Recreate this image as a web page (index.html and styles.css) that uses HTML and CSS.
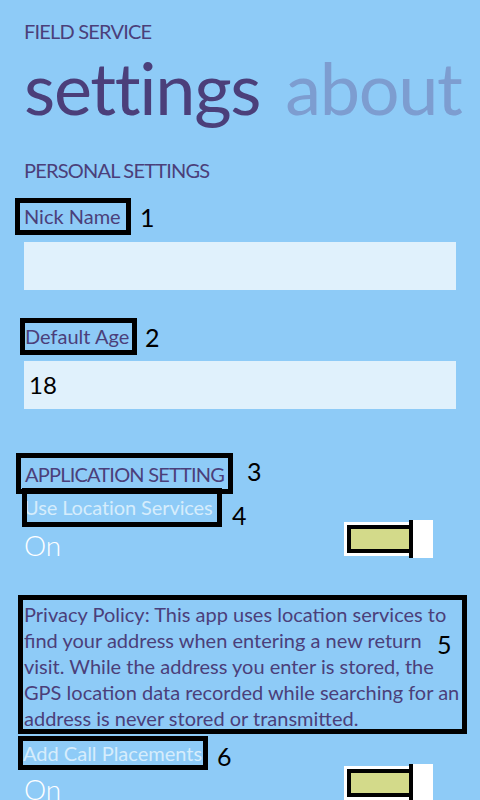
FILE: index.html
```html
<!DOCTYPE html>
<html lang="en">
<head>
<meta charset="utf-8">
<title>Field Service - settings</title>
<link rel="stylesheet" href="styles.css">
</head>
<body>
<div class="page">
  <div class="app-title caps">FIELD SERVICE</div>
  <div class="pivot"><span class="pivot-item active">settings</span><span class="pivot-item">about</span></div>

  <div class="section caps">PERSONAL SETTINGS</div>

  <div class="label-row row-1">
    <div class="tag tag-1">Nick Name</div>
    <span class="num num-1">1</span>
  </div>
  <div class="input"></div>

  <div class="label-row row-2">
    <div class="tag tag-2">Default Age</div>
    <span class="num num-2">2</span>
  </div>
  <div class="input input-2">18</div>

  <div class="label-row row-3">
    <div class="tag tag-3 caps">APPLICATION SETTING</div>
    <span class="num num-3">3</span>
  </div>
  <div class="label-row row-4">
    <div class="tag tag-4 light"><span class="clip-text">Use Location Services</span></div>
    <span class="num num-4">4</span>
  </div>
  <div class="switch-row row-on-1">
    <span class="on-text">On</span>
    <div class="toggle">
      <div class="track"><div class="fill"></div></div>
      <div class="thumb"></div>
    </div>
  </div>

  <div class="privacy">
    <div class="privacy-text">Privacy Policy: This app uses location services to<br>find your address when entering a new return<br>visit. While the address you enter is stored, the<br>GPS location data recorded while searching for an<br>address is never stored or transmitted.</div>
    <span class="num num-5">5</span>
  </div>

  <div class="label-row row-6">
    <div class="tag tag-6 light">Add Call Placements</div>
    <span class="num num-6">6</span>
  </div>
  <div class="switch-row row-on-2">
    <span class="on-text">On</span>
    <div class="toggle">
      <div class="track"><div class="fill"></div></div>
      <div class="thumb"></div>
    </div>
  </div>
</div>
</body>
</html>
```

FILE: styles.css
```css
html, body {
  margin: 0;
  padding: 0;
}
body {
  background: #8ecbf7;
  font-family: Lato, "Open Sans", "DejaVu Sans", sans-serif;
  color: #4b3f7a;
  overflow: hidden;
}
.page {
  padding: 21px 24px 0 24px;
  height: 779px;
}
.caps {
  letter-spacing: -0.8px;
}
.app-title {
  font-size: 20px;
  line-height: 20px;
}
.pivot {
  margin-top: 10px;
  font-size: 72px;
  line-height: 72px;
  white-space: nowrap;
  display: flex;
  gap: 25px;
}
.pivot-item {
  color: #7d9dd0;
  letter-spacing: -1.3px;
}
.pivot-item.active {
  color: #4b3f7a;
}
.section {
  margin-top: 37px;
  font-size: 20px;
  line-height: 20px;
}
.label-row {
  display: flex;
  align-items: flex-start;
}
.tag {
  box-sizing: border-box;
  border: 5px solid #000;
  font-size: 20px;
  white-space: nowrap;
  overflow: hidden;
}
.tag.light {
  color: #d6edfc;
}
.num {
  color: #000;
  font-size: 25px;
  line-height: 25px;
}
.row-1 { margin-top: 18px; }
.tag-1 {
  margin-left: -9px;
  width: 116px;
  height: 37px;
  line-height: 27px;
  padding-left: 4px;
}
.num-1 { margin: 7px 0 0 9px; }

.input {
  margin-top: 7px;
  height: 48px;
  background: #e0f1fc;
  color: #000;
  font-size: 24px;
  line-height: 48px;
  padding-left: 5px;
}
.row-2 { margin-top: 28px; }
.tag-2 {
  margin-left: -4px;
  width: 117px;
  height: 37px;
  line-height: 27px;
  padding-left: 0;
}
.num-2 { margin: 7px 0 0 8px; }
.input-2 { margin-top: 6px; }

.row-3 { margin-top: 44px; }
.tag-3 {
  margin-left: -8px;
  width: 217px;
  height: 41px;
  padding: 2px 0 0 4px;
  line-height: 29px;
}
.num-3 { margin: 6px 0 0 14px; }

.row-4 { margin-top: -6px; }
.tag-4 {
  margin-left: -2px;
  width: 200px;
  height: 39px;
  line-height: 29px;
}
.clip-text {
  display: block;
  margin-left: -3px;
  letter-spacing: -0.1px;
}
.num-4 { margin: 15px 0 0 10px; }

.switch-row {
  display: flex;
  align-items: flex-start;
  justify-content: space-between;
  padding-right: 23px;
}
.row-on-1 { margin-top: -8px; }
.row-on-2 { margin-top: -6px; }
.on-text {
  margin-top: 6px;
  font-size: 28px;
  line-height: 38px;
  font-weight: 300;
  color: #ffffff;
}
.toggle {
  display: flex;
  align-items: center;
  height: 38px;
}
.track {
  background: #ffffff;
  padding: 3px 0 3px 3px;
}
.fill {
  width: 58px;
  height: 20px;
  background: #d3da8a;
  border: 4px solid #000;
  border-right: 0;
}
.thumb {
  box-sizing: border-box;
  width: 24px;
  height: 38px;
  background: #ffffff;
  border-left: 4px solid #000;
}

.privacy {
  position: relative;
  box-sizing: border-box;
  margin: 31px 0 0 -6px;
  width: 449px;
  height: 139px;
  border: 5px solid #000;
  overflow: hidden;
}
.privacy-text {
  padding: 1px 0 0 1px;
  font-size: 20px;
  line-height: 26px;
  white-space: nowrap;
}
.num-5 {
  position: absolute;
  left: 414px;
  top: 32px;
}

.row-6 { margin-top: 2px; }
.tag-6 {
  margin-left: -6px;
  width: 190px;
  height: 34px;
  line-height: 24px;
}
.num-6 { margin: 8px 0 0 9px; }
```
